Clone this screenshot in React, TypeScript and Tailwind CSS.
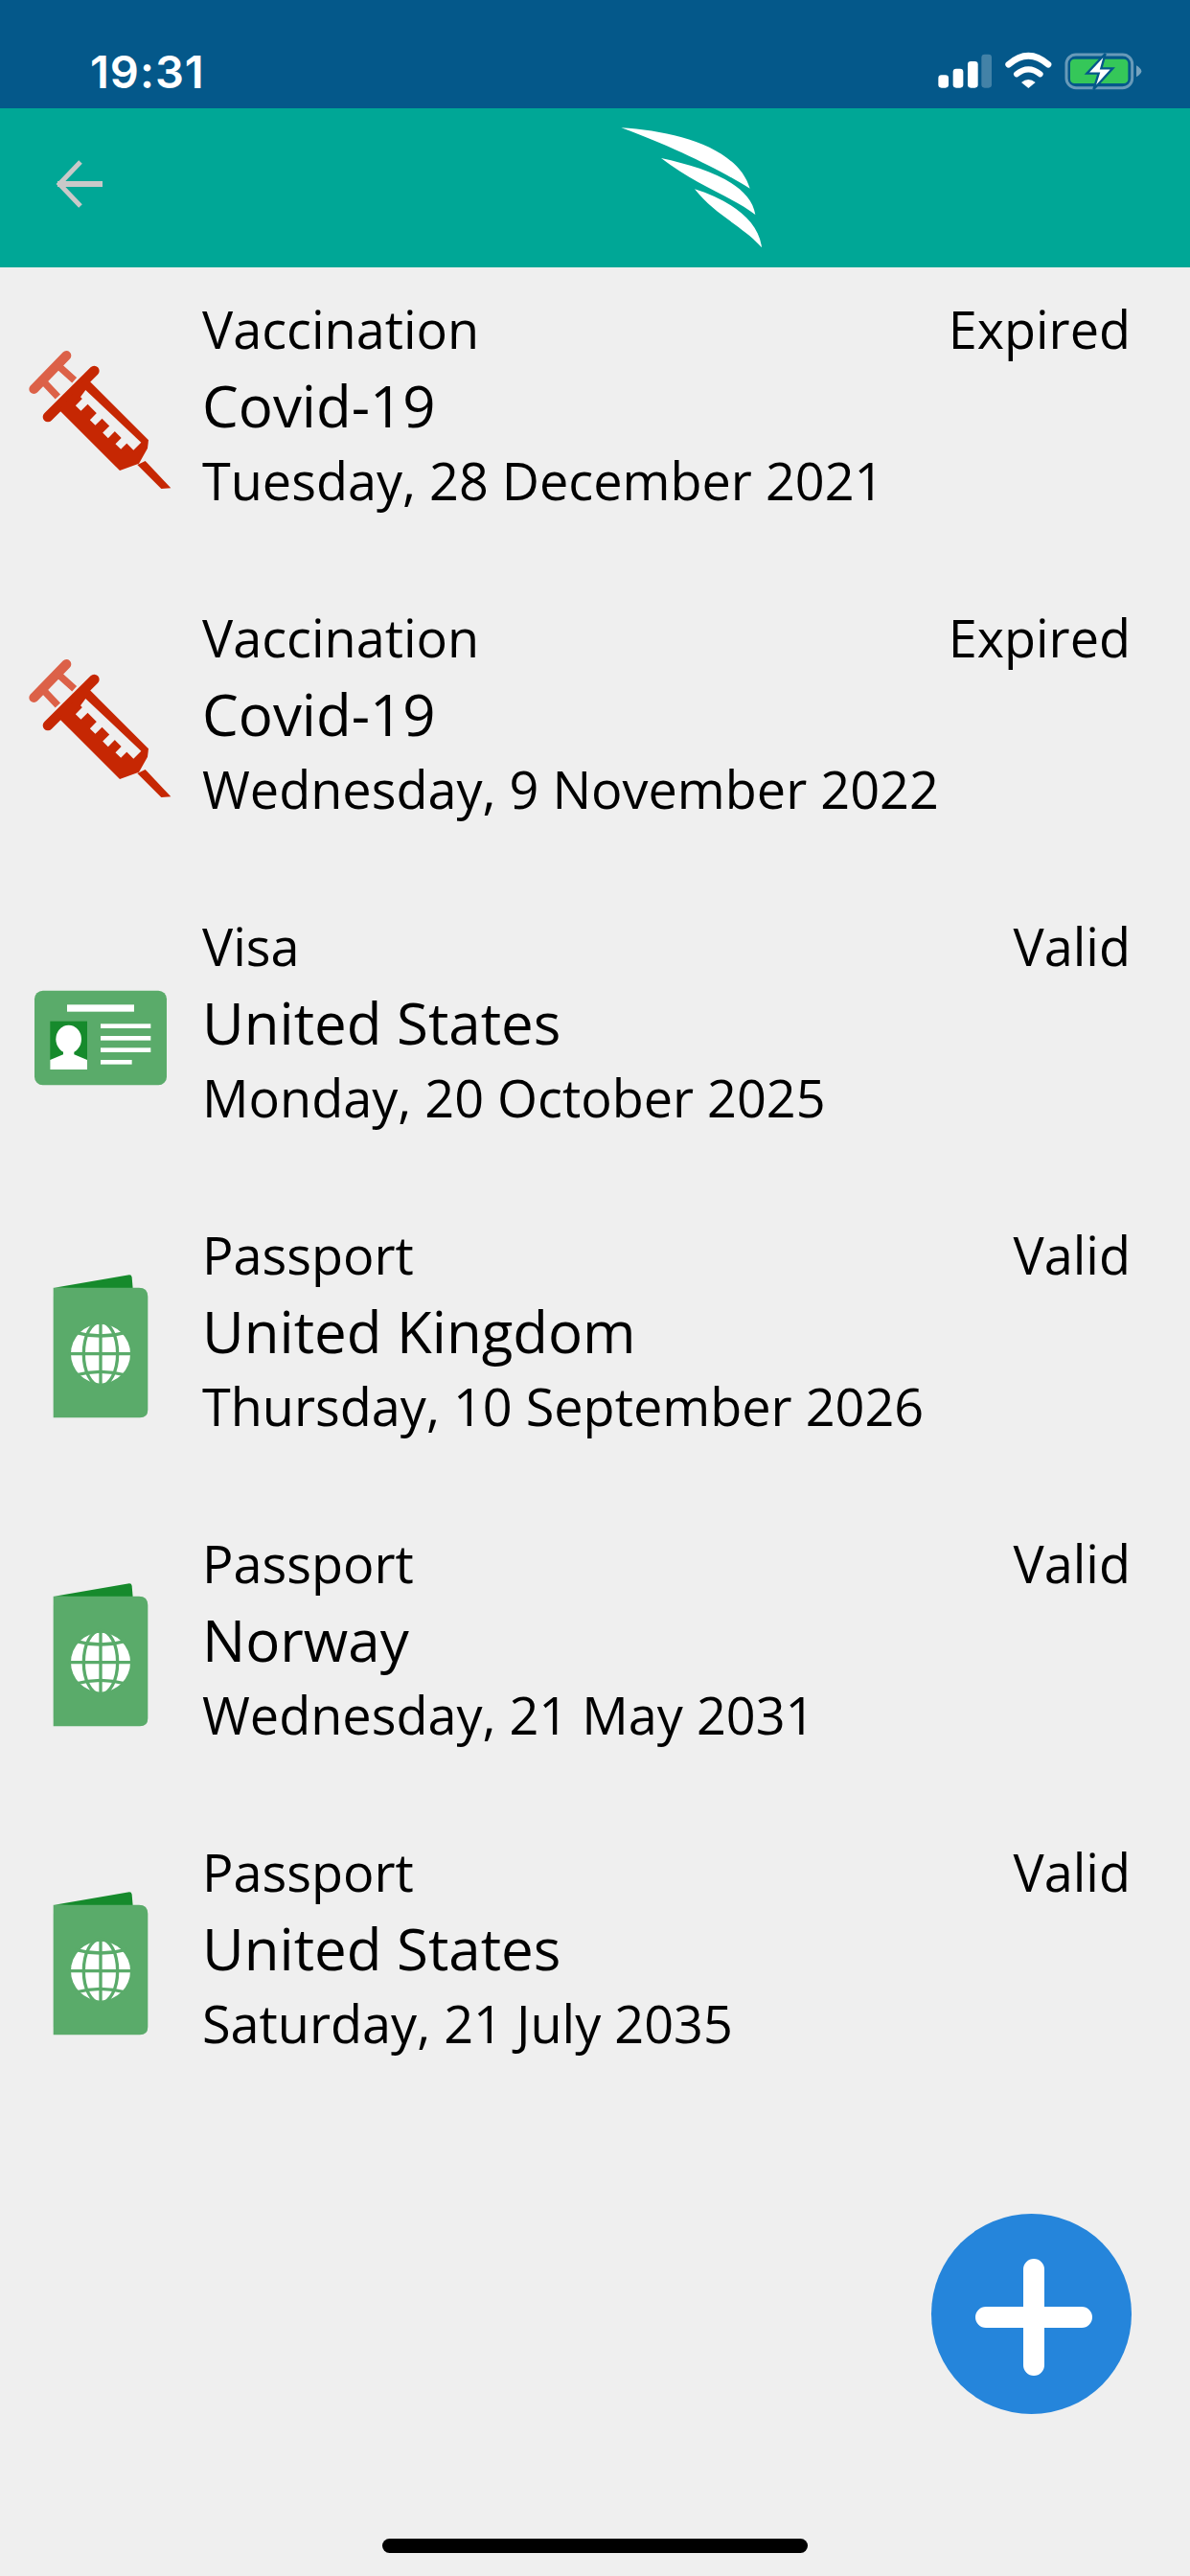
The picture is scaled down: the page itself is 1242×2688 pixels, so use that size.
const documents = [
  { kind: 'syringe', type: 'Vaccination', name: 'Covid-19', date: 'Tuesday, 28 December 2021', status: 'Expired' },
  { kind: 'syringe', type: 'Vaccination', name: 'Covid-19', date: 'Wednesday, 9 November 2022', status: 'Expired' },
  { kind: 'card', type: 'Visa', name: 'United States', date: 'Monday, 20 October 2025', status: 'Valid' },
  { kind: 'passport', type: 'Passport', name: 'United Kingdom', date: 'Thursday, 10 September 2026', status: 'Valid' },
  { kind: 'passport', type: 'Passport', name: 'Norway', date: 'Wednesday, 21 May 2031', status: 'Valid' },
  { kind: 'passport', type: 'Passport', name: 'United States', date: 'Saturday, 21 July 2035', status: 'Valid' },
];

// ============ status bar ============

function StatusIcons() {
  return (
    <svg viewBox="0 0 780 210" className="w-[260px] h-[70px] mt-[30px]">
      <rect x="88" y="145" width="32" height="40" rx="10" fill="#fff" />
      <rect x="134" y="125" width="32" height="60" rx="10" fill="#fff" />
      <rect x="180" y="102" width="32" height="83" rx="10" fill="#fff" />
      <rect x="223" y="80" width="32" height="105" rx="10" fill="#fff" opacity="0.25" />
      <path d="M308 112 Q370 58 432 112" fill="none" stroke="#fff" strokeWidth="20" strokeLinecap="round" />
      <path d="M333 142 Q370 112 407 142" fill="none" stroke="#fff" strokeWidth="18" strokeLinecap="round" />
      <path d="M348 168 Q370 150 392 168 L370 186 Z" fill="#fff" />
      <rect x="489" y="81" width="206" height="104" rx="30" fill="none" stroke="#fff" strokeOpacity="0.4" strokeWidth="9" />
      <rect x="501" y="95" width="181" height="76" rx="13" fill="#35c759" />
      <path d="M708 115 Q724 125 724 133 Q724 141 708 151 Z" fill="#fff" opacity="0.45" />
      <path d="M611 78 L553 140 L590 140 L574 190 L634 124 L598 124 Z" fill="#fff" stroke="#04588a" strokeWidth="7" />
    </svg>
  );
}

// ============ header ============

function BackArrow() {
  return (
    <svg viewBox="0 0 50 50" className="w-[50px] h-[50px] ml-[58px] mt-[54px]" fill="none" stroke="#c9c9c9">
      <path d="M2 25 H49" strokeWidth="6" />
      <path d="M26 2 L4 25 L26 48" strokeWidth="5" />
    </svg>
  );
}

function Logo() {
  return (
    <svg viewBox="0 0 540 450" className="w-[180px] h-[150px] ml-[512px] mt-[7px]" fill="#fff">
      <path d="M85 40 C250 50 450 100 488 230 C400 175 250 100 85 40 Z" />
      <path d="M210 135 C350 165 490 215 505 312 C440 260 320 220 210 135 Z" />
      <path d="M315 232 C420 265 515 325 525 415 C470 350 380 315 315 232 Z" />
    </svg>
  );
}

// ============ icons ============

function SyringeIcon() {
  return (
    <g transform="translate(0 52) scale(0.3333)">
      <g fill="none" stroke="#dc6148" strokeLinecap="round">
        <path d="M106 225 L208 120" strokeWidth="30" />
        <path d="M135 200 L181 249 M177 147 L233 197" strokeWidth="22" strokeLinecap="butt" />
      </g>
      <path d="M150 312 L295 168" stroke="#c62703" strokeWidth="32" strokeLinecap="round" />
      <path d="M270 190 L465 385 L462 410 L435 458 L375 480 L185 290 Z" fill="#c62703" />
      <path d="M455 450 L535 535 L505 537 L430 462 Z" fill="#c62703" />
      <path d="M268 228 L442 392 L418 416 L398 396 L252 250 Z" fill="#efefef" />
      <g stroke="#efefef" strokeWidth="24">
        <path d="M270 260 L245 285 M315 305 L290 330 M355 345 L330 370 M395 380 L370 405" />
      </g>
    </g>
  );
}

function CardIcon() {
  return (
    <g transform="translate(0 68) scale(0.3333)">
      <rect x="108" y="128" width="414" height="296" rx="26" fill="#5aab6a" />
      <rect x="210" y="172" width="210" height="22" fill="#fff" />
      <rect x="157" y="224" width="116" height="151" fill="#168a2c" />
      <ellipse cx="215" cy="280" rx="40" ry="44" fill="#fff" />
      <path d="M157 345 L198 328 L198 310 H232 L232 328 L273 345 V375 H157 Z" fill="#fff" />
      <rect x="315" y="232" width="157" height="14" fill="#fff" />
      <rect x="315" y="270" width="157" height="14" fill="#fff" />
      <rect x="315" y="307" width="157" height="14" fill="#fff" />
      <rect x="315" y="345" width="98" height="14" fill="#fff" />
    </g>
  );
}

function PassportIcon() {
  return (
    <g transform="translate(20 56) scale(0.3333)">
      <path d="M110 128 L345 88 Q352 88 353 95 L356 132 Z" fill="#168a2c" />
      <path d="M107 128 H375 Q403 128 403 156 V510 Q403 535 378 535 H107 Z" fill="#5aab6a" />
      <circle cx="255" cy="335" r="93" fill="#fff" />
      <g fill="none" stroke="#5aab6a" strokeWidth="10">
        <ellipse cx="255" cy="335" rx="53" ry="100" />
        <path d="M255 235 V435" />
        <path d="M155 335 H355" />
        <path d="M175 268 Q255 290 335 268" />
        <path d="M175 402 Q255 380 335 402" />
      </g>
    </g>
  );
}

function DocIcon({ kind }: { kind: string }) {
  return (
    <svg viewBox="0 0 211 322" className="w-[211px] h-[322px] shrink-0">
      {kind === 'syringe' && <SyringeIcon />}
      {kind === 'card' && <CardIcon />}
      {kind === 'passport' && <PassportIcon />}
    </svg>
  );
}

// ============ list ============

function DocRow({ doc }: { doc: (typeof documents)[number] }) {
  return (
    <div className="flex h-[322px]">
      <DocIcon kind={doc.kind} />
      <div className="flex-1 pr-[62px] pt-[24px] text-black">
        <div className="flex justify-between text-[54px] leading-[80px]">
          <span>{doc.type}</span>
          <span>{doc.status}</span>
        </div>
        <div className="text-[60px] leading-[80px]">{doc.name}</div>
        <div className="text-[54px] leading-[76px]">{doc.date}</div>
      </div>
    </div>
  );
}

export default function App() {
  return (
    <div className="relative w-[1242px] h-[2688px] overflow-hidden bg-[#efefef] font-['Open_Sans',sans-serif]">
      <div className="flex justify-between h-[113px] pl-[94px] pr-[32px] bg-[#04588a]">
        <span className="mt-[50px] text-[47px] leading-[50px] tracking-[1px] font-semibold text-white font-['Inter',sans-serif]">19:31</span>
        <StatusIcons />
      </div>
      <div className="flex h-[166px] bg-[#00a796]">
        <BackArrow />
        <Logo />
      </div>
      <div>
        {documents.map((doc, i) => (
          <DocRow key={i} doc={doc} />
        ))}
      </div>
      <button className="absolute left-[972px] top-[2310px] flex items-center justify-center w-[209px] h-[209px] rounded-full bg-[#2585db]">
        <svg viewBox="0 0 122 122" className="w-[122px] h-[122px] ml-[4px] mt-[7px]" stroke="#fff" strokeWidth="22" strokeLinecap="round">
          <path d="M11 61 H111 M61 11 V111" />
        </svg>
      </button>
      <div className="absolute left-[399px] top-[2649px] w-[444px] h-[15px] rounded-full bg-black" />
    </div>
  );
}
